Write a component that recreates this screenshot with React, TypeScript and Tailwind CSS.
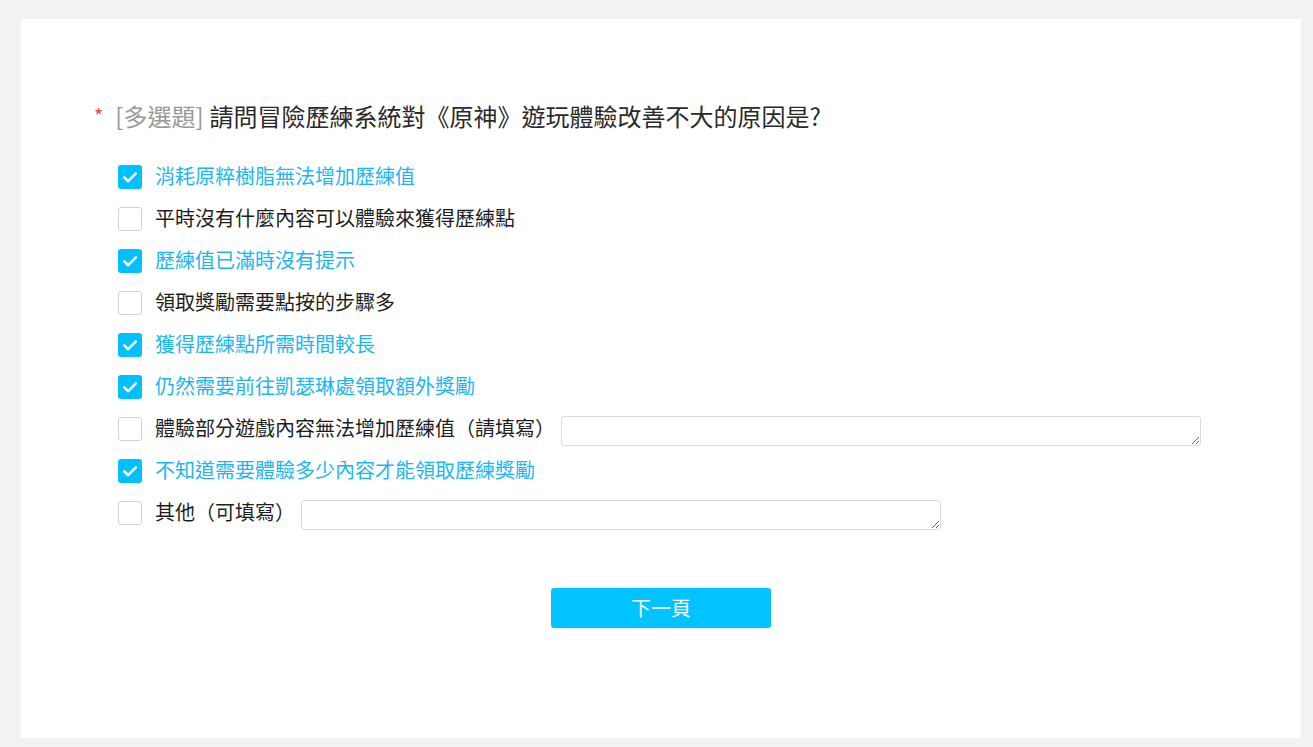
import React, { useState } from "react";

type Opt = { label: string; checked: boolean; input?: "long" | "short" };

const initial: Opt[] = [
  { label: "消耗原粹樹脂無法增加歷練值", checked: true },
  { label: "平時沒有什麼內容可以體驗來獲得歷練點", checked: false },
  { label: "歷練值已滿時沒有提示", checked: true },
  { label: "領取獎勵需要點按的步驟多", checked: false },
  { label: "獲得歷練點所需時間較長", checked: true },
  { label: "仍然需要前往凱瑟琳處領取額外獎勵", checked: true },
  { label: "體驗部分遊戲內容無法增加歷練值（請填寫）", checked: false, input: "long" },
  { label: "不知道需要體驗多少內容才能領取歷練獎勵", checked: true },
  { label: "其他（可填寫）", checked: false, input: "short" },
];

function Check({ on }: { on: boolean }) {
  if (on)
    return (
      <span className="flex h-[24px] w-[24px] shrink-0 items-center justify-center rounded-[3px] bg-[#00c0ff]">
        <svg width="24" height="24" viewBox="0 0 24 24" fill="none">
          <path d="M6.2 12.4 L10.2 16.2 L17.8 8.4" stroke="white" strokeWidth="2.6" strokeLinecap="round" strokeLinejoin="round" />
        </svg>
      </span>
    );
  return <span className="h-[24px] w-[24px] shrink-0 rounded-[3px] border border-[#d2d2d2] bg-white" />;
}

export default function App() {
  const [opts, setOpts] = useState(initial);
  return (
    <div
      className="min-h-[747px] w-full bg-[#f2f2f2] pl-[21px] pt-[19px]"
      style={{ fontFamily: '"Microsoft JhengHei", "Noto Sans CJK TC", "Noto Sans", sans-serif' }}
    >
      <div className="h-[719px] w-[1280px] bg-white pl-[73px] pt-[79px]">
        <div className="flex h-[36px] items-center text-[24px] leading-none">
          <span className="mr-[12px] text-[20px] text-[#e94b3c]">*</span>
          <span className="mr-[6px] text-[#999]">[多選題]</span>
          <span className="text-[#2a2a2a]">請問冒險歷練系統對《原神》遊玩體驗改善不大的原因是?</span>
        </div>
        <div className="mt-[22px] flex flex-col pl-[24px]">
          {opts.map((o, i) => (
            <div key={i} className="flex h-[42px] items-center">
              <button
                className="flex items-center gap-[13px]"
                onClick={() => setOpts(opts.map((x, j) => (j === i ? { ...x, checked: !x.checked } : x)))}
              >
                <Check on={o.checked} />
                <span className={`-mt-[2px] text-[20px] leading-none ${o.checked ? "text-[#1db6f2]" : "text-[#1e1e1e]"}`}>{o.label}</span>
              </button>
              {o.input && (
                <textarea className="ml-[6px] mt-[3px] h-[30px] w-[640px] rounded-[3px] border border-[#dcdcdc] outline-none" />
              )}
            </div>
          ))}
        </div>
        <div className="mt-[54px] flex w-[1134px] justify-center">
          <button className="h-[40px] w-[220px] rounded-[3px] bg-[#00c3ff] text-[20px] text-white">下一頁</button>
        </div>
      </div>
    </div>
  );
}
